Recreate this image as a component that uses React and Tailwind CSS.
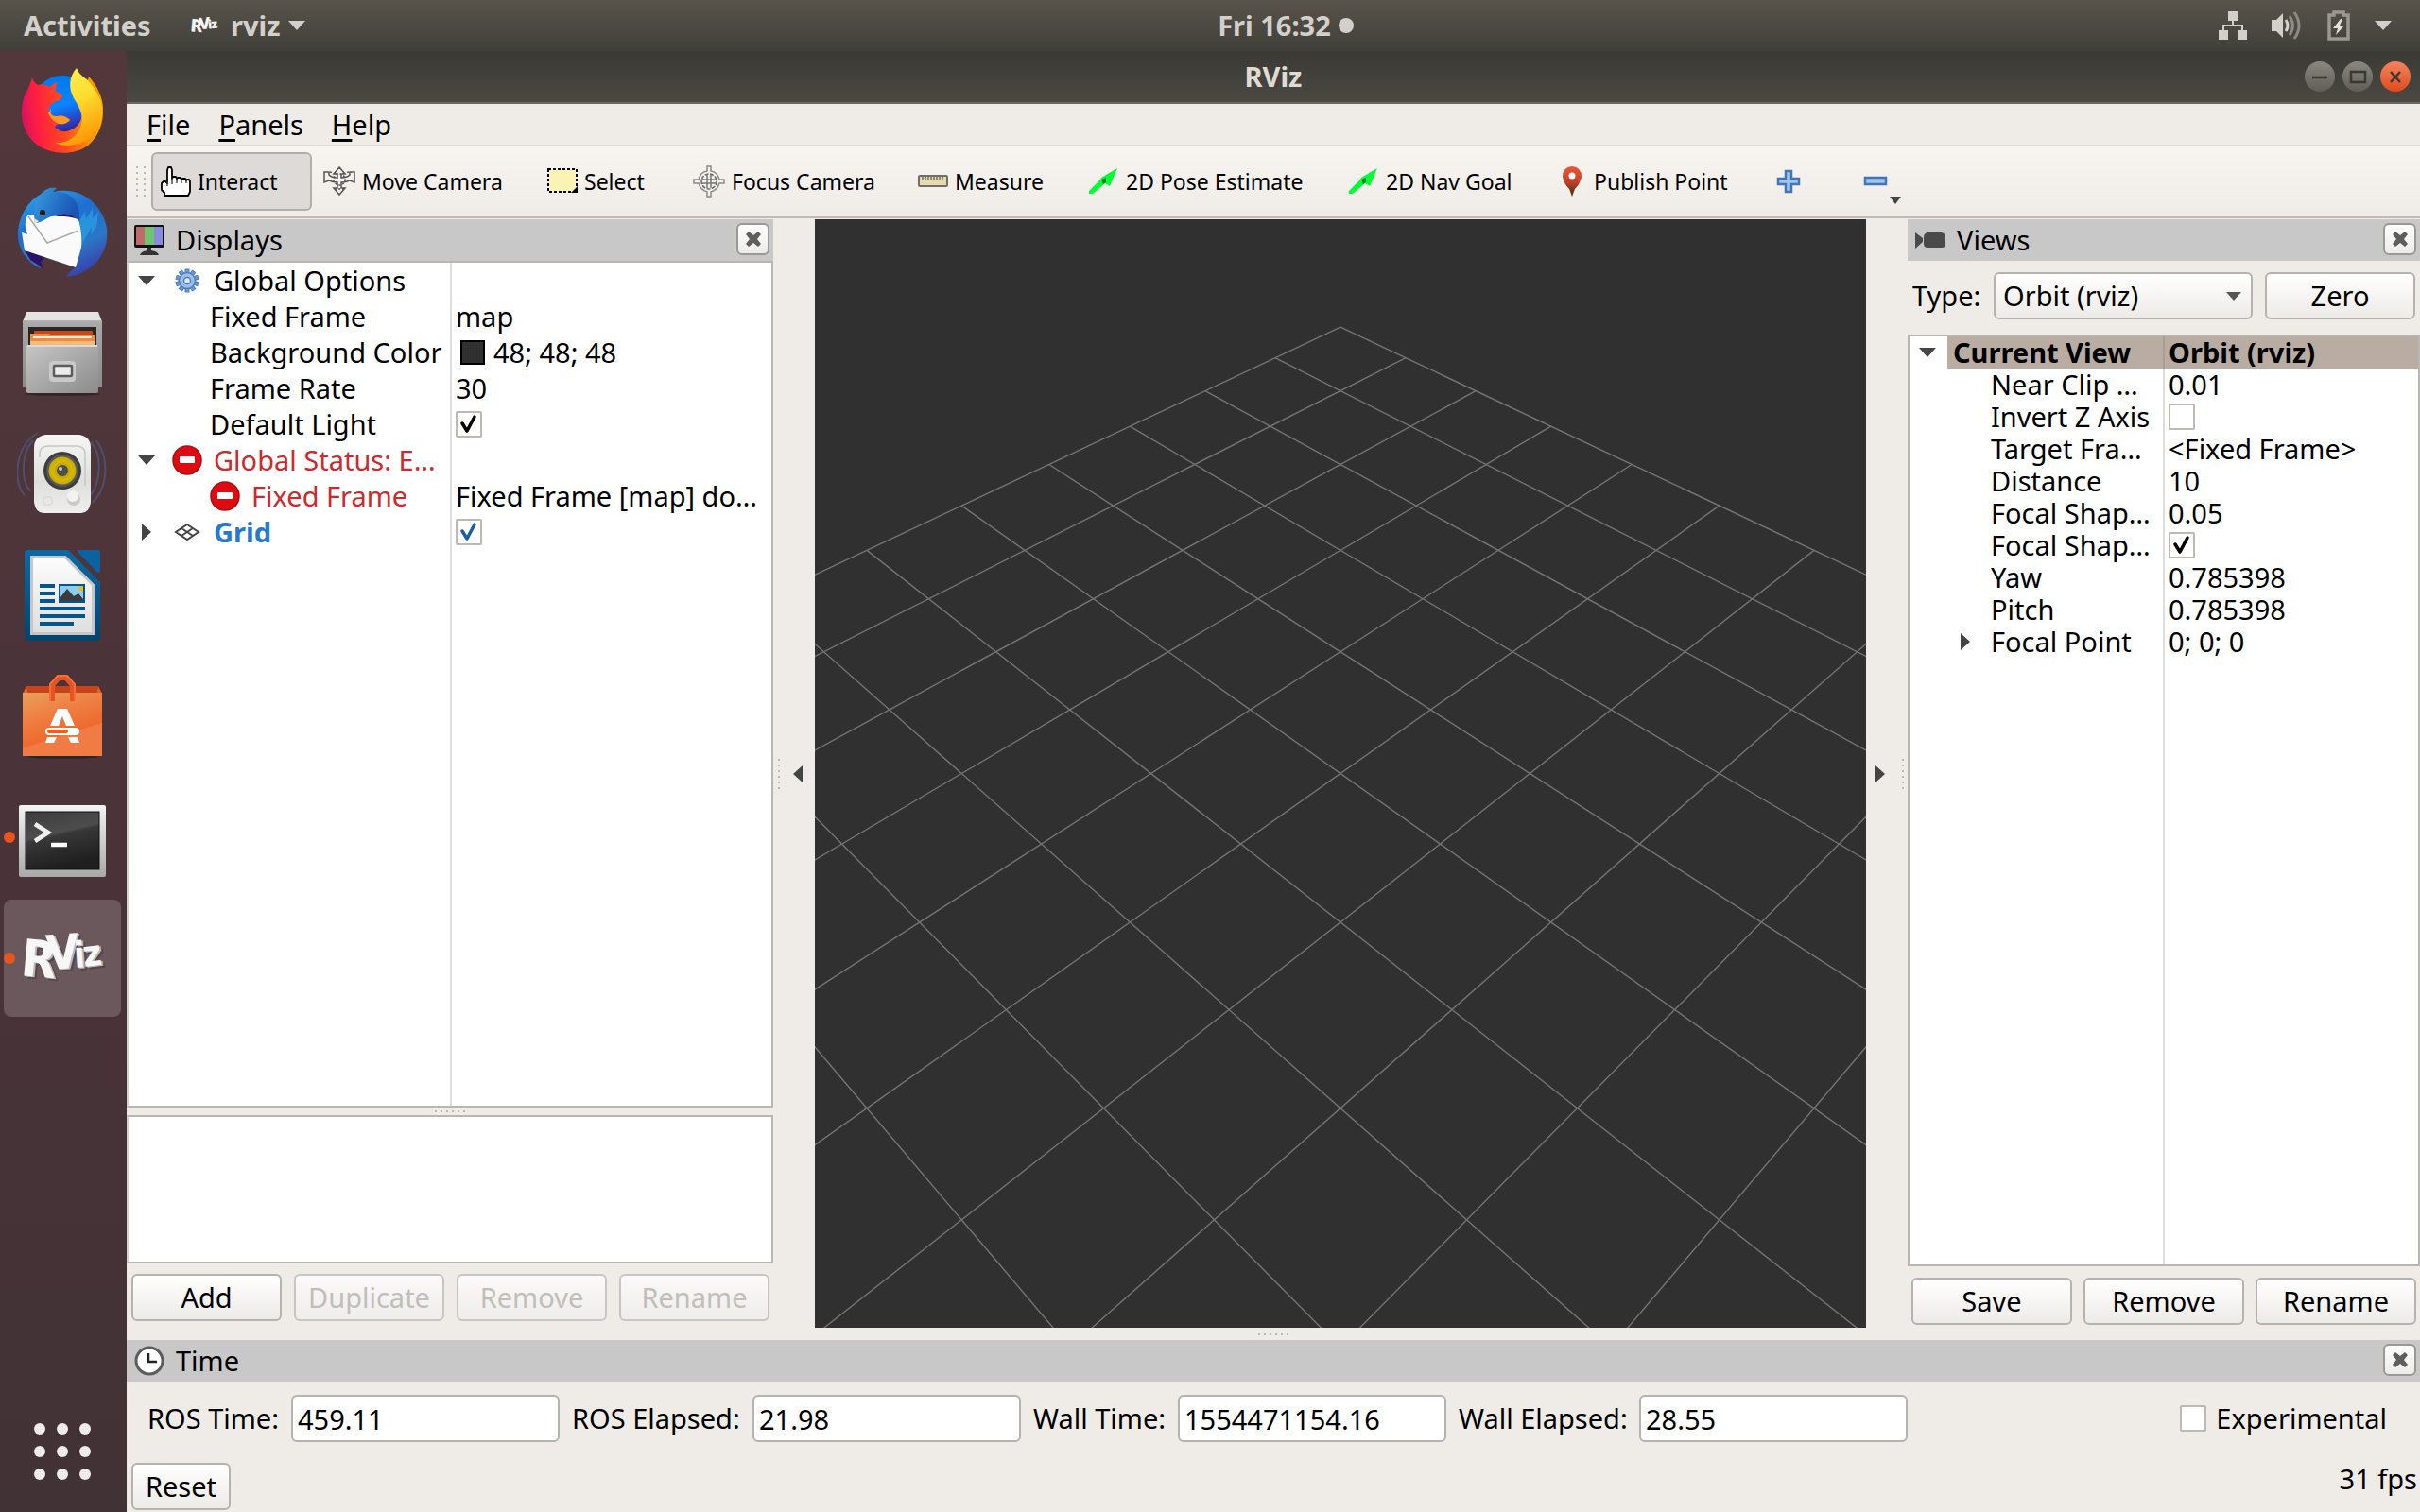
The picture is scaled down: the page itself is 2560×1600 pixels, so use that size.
import { useId } from "react";

const FONT = "font-['Noto_Sans','Open_Sans',sans-serif]";

/* ---------- small shared pieces ---------- */

function Tri({ dir = "down", className = "" }) {
  return dir === "down" ? (
    <svg viewBox="0 0 18 10" className={`h-[10px] w-[18px] shrink-0 ${className}`} fill="currentColor" aria-hidden="true"><path d="M0 0H18L9 10Z" /></svg>
  ) : (
    <svg viewBox="0 0 10 18" className={`h-[18px] w-[10px] shrink-0 ${className}`} fill="currentColor" aria-hidden="true"><path d={dir === "left" ? "M10 0V18L0 9Z" : "M0 0V18L10 9Z"} /></svg>
  );
}

function CheckBox({ checked = false, label, id, blue = false }) {
  return (
    <span className="inline-grid shrink-0 place-items-center">
      <input id={id} type="checkbox" defaultChecked={checked} aria-label={label} className="col-start-1 row-start-1 size-7 appearance-none rounded-[2px] border-2 border-[#bfb9b3] bg-white" />
      {checked && (
        <svg viewBox="0 0 28 28" className={`pointer-events-none col-start-1 row-start-1 size-7 ${blue ? "text-[#1c5da3]" : "text-black"}`} fill="none" stroke="currentColor" aria-hidden="true">
          <path d="M7 13 12 21 20 6" strokeWidth="3.500" strokeLinejoin="round" strokeLinecap="round" />
        </svg>
      )}
    </span>
  );
}

function Button({ children, disabled = false, className = "" }) {
  return (
    <button type="button" disabled={disabled} className={`h-[50px] rounded-[6px] border-2 border-[#b6b2ad] bg-linear-to-b from-white to-[#edebe8] text-center text-black disabled:border-[#c9c5c0] disabled:from-[#fbfafa] disabled:to-[#efedea] disabled:text-[#c1beba] ${className}`}>{children}</button>
  );
}

function PanelTitle({ icon, title, children }) {
  return (
    <div className="flex h-[44px] shrink-0 items-center bg-[#c8c8c8] pr-1 pl-2">
      {icon}
      <h2 className="ml-3 flex-1">{title}</h2>
      <button type="button" aria-label={`Close ${title}`} className="mb-[2px] flex h-[34px] w-[35px] items-center justify-center rounded-[6px] border-2 border-[#9b9995] bg-linear-to-b from-white to-[#ecebe9]">
        <svg viewBox="0 0 16 16" className="size-[16px]" fill="#5f5e5b" aria-hidden="true"><path d="M3 0 8 4 13 0 16 3 12 8 16 13 13 16 8 12 3 16 0 13 4 8 0 3Z" /></svg>
      </button>
      {children}
    </div>
  );
}

function Grip({ vertical = false }) {
  return (
    <span className={`flex gap-[4px] ${vertical ? "flex-col" : ""}`} aria-hidden="true">
      {[0, 1, 2, 3, 4, 5].map((i) => <i key={i} className="size-[2px] bg-[#bcb7b1]" />)}
    </span>
  );
}

/* ---------- dock icons ---------- */

function Firefox() {
  return (
    <svg viewBox="0 0 96 96" className="size-24" aria-hidden="true">
      <defs>
        <linearGradient id="ffGlobe" x1="0.3" y1="0" x2="0.6" y2="1"><stop offset="0" stopColor="#0078e8" /><stop offset="0.5" stopColor="#0a84ff" /><stop offset="0.8" stopColor="#2b3fc0" /><stop offset="1" stopColor="#3a0f6e" /></linearGradient>
        <linearGradient id="ffBody" x1="0" y1="0.5" x2="1" y2="0.4"><stop offset="0" stopColor="#d9125f" /><stop offset="0.18" stopColor="#ff1d43" /><stop offset="0.5" stopColor="#ff4a1c" /><stop offset="0.78" stopColor="#ff8b0d" /><stop offset="1" stopColor="#ffb400" /></linearGradient>
        <linearGradient id="ffFlame" x1="0" y1="0" x2="0.3" y2="1"><stop offset="0" stopColor="#fff25a" /><stop offset="0.5" stopColor="#ffdd2e" /><stop offset="1" stopColor="#ff9d0a" /></linearGradient>
      </defs>
      <circle cx="48" cy="42" r="32" fill="url(#ffGlobe)" />
      <path fill="#ff9500" d="M76 11C84 20 91 32 91 46L70 30Z" />
      <path fill="url(#ffBody)" d="M16 12C17 16 19 18 22 20C27 19 32 20 35 22Q38 18 43 17Q40 22 41 27Q47 28 48 32Q46 37 41 37Q35 40 33 46Q35 54 42 53Q50 51 56 57Q52 62 45 61Q40 62 40 65Q46 70 53 69C64 66 71 57 69 44Q68 36 72 30L88 32C95 52 89 72 75 84C60 95 36 94 21 83C6 71 2 52 7 34C9 27 13 24 16 12Z" />
      <path fill="#ff9a1f" d="M36 45Q34 54 42 53Q50 51 56 57Q52 62 45 61Q37 59 33 50Z" />
      <path fill="url(#ffFlame)" d="M63 2C55 11 54 23 60 34C69 47 73 60 62 73C55 80 46 82 40 81C56 88 76 82 86 66C95 48 88 29 75 15C70 11 65 8 63 2Z" />
    </svg>
  );
}

function Thunderbird() {
  return (
    <svg viewBox="0 0 96 96" className="size-24" aria-hidden="true">
      <defs>
        <linearGradient id="tbBody" x1="0.2" y1="0" x2="0.7" y2="1"><stop offset="0" stopColor="#2e9fe6" /><stop offset="0.35" stopColor="#1f6fd0" /><stop offset="0.7" stopColor="#2a77c6" /><stop offset="1" stopColor="#3b3ca8" /></linearGradient>
        <linearGradient id="tbHead" x1="0" y1="0" x2="1" y2="0.4"><stop offset="0" stopColor="#3d9fdc" /><stop offset="0.6" stopColor="#2371c7" /><stop offset="1" stopColor="#1b54b4" /></linearGradient>
      </defs>
      <path fill="url(#tbBody)" d="M25 86C8 78 0 63 1 46C3 29 12 15 24 8L44 4C68 1 90 17 95 43C98 68 82 92 52 95L58 89 50 94 62 85 8 66 12 73 20 77 25 86Z" />
      <path fill="#2b1468" d="M8 66 30 74 25 79 28 86 14 77ZM40 32C50 25 60 29 65 36L62 46H34Z" />
      <path fill="#fafafa" d="M11 30 26 30C40 32 50 29 65 34C68 44 69 54 68 64L62 85 8 67 5 48 11 50C8 42 8 36 11 30Z" />
      <path fill="none" stroke="#a9a9a9" strokeWidth="1.500" d="M12 31 32 59 65 46" />
      <path fill="url(#tbHead)" d="M19 38C17 26 18 12 30 3C35 0 40 0 42 1L38 5C56 4 68 14 66 36C56 26 44 27 34 32C28 35 24 38 19 38Z" />
      <path fill="#28a2e4" d="M66 36 72 25 73 34 80 22 80 33 86 26 84 42 78 50 79 42 70 58Z" opacity="0.700" />
      <circle cx="27" cy="27" r="3" fill="#2a1a08" />
      <path fill="#dfe9c4" d="M18 33 19 39 23 36Z" />
    </svg>
  );
}

function Files() {
  return (
    <svg viewBox="0 0 96 96" className="size-24" aria-hidden="true">
      <defs>
        <linearGradient id="flCase" x1="0" y1="0" x2="0" y2="1"><stop offset="0" stopColor="#dcdcdc" /><stop offset="0.15" stopColor="#a9a9a9" /><stop offset="1" stopColor="#8c8c8c" /></linearGradient>
        <linearGradient id="flFront" x1="0" y1="0" x2="1" y2="1"><stop offset="0" stopColor="#c6c6c6" /><stop offset="1" stopColor="#8b8b8b" /></linearGradient>
      </defs>
      <ellipse cx="48" cy="91" rx="40" ry="2" fill="#000" opacity="0.300" />
      <path fill="url(#flCase)" d="M10 4H86L90 14V83H6V14Z" />
      <path fill="#e3e3e3" d="M11 4H85L89 13H7Z" />
      <path fill="#2b2622" d="M12 20H84V40H12Z" />
      <path fill="#c4481c" d="M18 24H80V30H18Z" /><path fill="#f08a3c" d="M14 27H34L36 28H82V40H14Z" />
      <path fill="#ffe9d6" d="M17 30H79V32H17Z" /><path fill="#f6bb7c" d="M14 35H82V40H14Z" />
      <rect x="10" y="39" width="76" height="51" rx="2" fill="url(#flFront)" /><path fill="#dadada" d="M11 39H85V41H11Z" />
      <rect x="34" y="56" width="28" height="22" rx="4" fill="#c9c9c9" />
      <rect x="39" y="61" width="19" height="11" rx="1" fill="#ececec" stroke="#5c5c5c" strokeWidth="2.500" />
    </svg>
  );
}

function Rhythmbox() {
  return (
    <svg viewBox="0 0 96 96" className="size-24" aria-hidden="true">
      <defs>
        <linearGradient id="rbBody" x1="0" y1="0" x2="0" y2="1"><stop offset="0" stopColor="#f6f6f4" /><stop offset="0.6" stopColor="#dededc" /><stop offset="1" stopColor="#efefed" /></linearGradient>
        <radialGradient id="rbCone"><stop offset="0" stopColor="#a08600" /><stop offset="0.7" stopColor="#d6b800" /><stop offset="1" stopColor="#c9a900" /></radialGradient>
      </defs>
      <g fill="none" stroke="#50618e" strokeWidth="2" opacity="0.600">
        <path d="M22 4C-4 20-4 58 8 70M17 12C4 26 4 54 14 66M78 14C90 26 90 56 76 72M84 12C98 32 96 62 80 78" />
      </g>
      <path fill="url(#rbBody)" d="M30 6H66Q78 8 78 20V78Q76 89 68 89H28Q20 89 18 78V20Q18 8 30 6Z" />
      <path fill="none" stroke="#c3c6cb" strokeWidth="1.500" d="M24 30V26Q24 19 32 18H64Q72 19 72 26V60" />
      <circle cx="48" cy="44" r="20" fill="#3b3d3e" /><circle cx="48" cy="44" r="17" fill="#55585a" /><circle cx="48" cy="44" r="14.500" fill="url(#rbCone)" />
      <circle cx="48" cy="44" r="6" fill="#4c4e50" /><circle cx="46" cy="42" r="2" fill="#c4c6c8" />
      <circle cx="60" cy="74" r="7" fill="#c9c9c7" /><circle cx="59" cy="71" r="6" fill="#f2f2f0" />
      <rect x="28" y="72" width="9" height="8" rx="2" fill="none" stroke="#d2d2cf" />
    </svg>
  );
}

function Writer() {
  return (
    <svg viewBox="0 0 96 96" className="size-24" aria-hidden="true">
      <defs>
        <linearGradient id="wrEdge" x1="0" y1="0" x2="0" y2="1"><stop offset="0" stopColor="#0a6aa6" /><stop offset="1" stopColor="#04446d" /></linearGradient>
        <linearGradient id="wrPage" x1="0" y1="0" x2="0" y2="1"><stop offset="0" stopColor="#fdfdfd" /><stop offset="1" stopColor="#dedede" /></linearGradient>
      </defs>
      <path fill="url(#wrEdge)" d="M12 0H54L88 34V92Q88 96 84 96H12Q8 96 8 92V4Q8 0 12 0Z" />
      <path fill="#0a63a0" d="M64 0H85Q88 0 88 3V22Q87 25 84 23L65 3Q63 1 64 0Z" />
      <path fill="url(#wrPage)" stroke="#c6c6c6" strokeWidth="3" d="M15.500 7.500H51L80.500 37V88.500H15.500Z" />
      <path fill="#065587" d="M24 36H40V40H24ZM24 44H40V48H24ZM24 52H40V56H24ZM24 60H72V64H24ZM24 68H72V72H24ZM24 76H60V80H24Z" />
      <path fill="#06558a" d="M44 36H72V56H44Z" /><path fill="#8fcdf0" d="M46 38H70V54H46Z" />
      <path fill="#e0b83c" d="M64 38H70V44Q65 44 64 38Z" /><path fill="#3c3c3c" d="M46 54V50L53 41 60 49 65 46 70 52V54Z" />
    </svg>
  );
}

function Software() {
  return (
    <svg viewBox="0 0 96 96" className="size-24" aria-hidden="true">
      <defs>
        <linearGradient id="swBag" x1="0" y1="0" x2="0.4" y2="1"><stop offset="0" stopColor="#e8a05c" /><stop offset="0.4" stopColor="#ef7f43" /><stop offset="0.75" stopColor="#ee6a2e" /><stop offset="0.76" stopColor="#f07b45" /><stop offset="1" stopColor="#f07b45" /></linearGradient>
      </defs>
      <ellipse cx="48" cy="91" rx="38" ry="2" fill="#000" opacity="0.300" />
      <path fill="#c7441a" d="M10 16H86L84 24H12Z" /><path fill="#e9602c" d="M10 16 12 24H6ZM86 16 84 24H90Z" />
      <path fill="url(#swBag)" d="M6 23H90V90H6Z" />
      <path fill="none" stroke="#e6551f" strokeWidth="6" d="M37 32V15L44 7H52L59 15V32" /><path fill="none" stroke="#f37a45" strokeWidth="1.500" d="M35 32V14L43 5H53L61 14V32" />
      <path fill="#fff" d="M43 40H53L61 58H52L48 48 44 58H35ZM32 70H42L39 76H30ZM54 70H64L66 76H57Z" />
      <rect x="30" y="60" width="36" height="8" rx="4" fill="#fff" /><rect x="32" y="62" width="22" height="4" rx="2" fill="#ee5f22" />
    </svg>
  );
}

function Terminal() {
  return (
    <svg viewBox="0 0 96 96" className="size-24" aria-hidden="true">
      <defs>
        <linearGradient id="tmFrame" x1="0" y1="0" x2="0" y2="1"><stop offset="0" stopColor="#f4f4f4" /><stop offset="1" stopColor="#a9a9a9" /></linearGradient>
        <linearGradient id="tmScreen" x1="0" y1="0" x2="0.3" y2="1"><stop offset="0" stopColor="#3c3c3c" /><stop offset="0.45" stopColor="#4d4d4d" /><stop offset="0.5" stopColor="#383838" /><stop offset="1" stopColor="#1f1f1f" /></linearGradient>
      </defs>
      <rect x="2" y="14" width="92" height="76" rx="2" fill="url(#tmFrame)" />
      <rect x="9" y="21" width="78" height="61" fill="url(#tmScreen)" stroke="#111" />
      <path fill="none" stroke="#eee" strokeWidth="4.500" d="M19 34 33 43 19 52" /><path stroke="#fff" strokeWidth="4.500" d="M36 56H53" />
    </svg>
  );
}

function RvizLogo({ className }) {
  return (
    <svg viewBox="0 0 96 96" className={className} aria-label="RViz" role="img">
      {[["#55464b", 4, 3], ["#b9b9b9", 2, 1], ["#f7f7f7", 0, 0]].map(([c, dx, dy]) => (
        <g key={c} fill={c} fontFamily="'DejaVu Sans Condensed','DejaVu Sans'" fontWeight="700" transform={`translate(${dx} ${dy})`}>
          <text x="0" y="0" fontSize="54" transform="translate(3 66) rotate(5)">R</text>
          <text x="0" y="0" fontSize="50" transform="translate(32 60) rotate(-4)">V</text>
          <text x="0" y="0" fontSize="38" transform="translate(61 58) rotate(-4)">i</text>
          <text x="0" y="0" fontSize="38" transform="translate(71 57) rotate(-7)">z</text>
        </g>
      ))}
    </svg>
  );
}

const DOCK = [
  { name: "Firefox", icon: <Firefox /> },
  { name: "Thunderbird", icon: <Thunderbird /> },
  { name: "Files", icon: <Files /> },
  { name: "Rhythmbox", icon: <Rhythmbox /> },
  { name: "LibreOffice Writer", icon: <Writer /> },
  { name: "Ubuntu Software", icon: <Software /> },
  { name: "Terminal", icon: <Terminal />, running: true },
  { name: "RViz", icon: <RvizLogo className="size-24" />, running: true, active: true },
];

function Dock() {
  return (
    <nav aria-label="Dock" className="flex w-[134px] shrink-0 flex-col bg-linear-to-b from-[#52383b] via-[#4a3339] to-[#413236]">
      {DOCK.map((d) => (
        <div key={d.name} className="flex h-32 items-center">
          <button type="button" aria-label={d.name} className={`relative mx-1 flex h-[124px] w-[124px] items-center justify-center rounded-[8px] ${d.active ? "bg-[#6a585d]" : ""}`}>
            {d.running && <span className="absolute left-0 size-3 rounded-full bg-[#e9541f]" />}
            {d.icon}
          </button>
        </div>
      ))}
      <button type="button" aria-label="Show Applications" className="mt-auto mb-[34px] ml-9 grid w-[60px] grid-cols-3 gap-3">
        {[0, 1, 2, 3, 4, 5, 6, 7, 8].map((i) => <i key={i} className="size-3 rounded-full bg-[#eeeceb]" />)}
      </button>
    </nav>
  );
}

/* ---------- top bar and title bar ---------- */

function TopBar() {
  return (
    <header className="flex h-[54px] shrink-0 items-center bg-linear-to-b from-[#58544b] to-[#403f39] font-bold text-[#d3d0cb]">
      <button type="button" className="w-[160px] pl-[25px] text-left">Activities</button>
      <div className="grid flex-1 grid-cols-[1fr_auto_1fr] items-center">
        <button type="button" className="flex items-center pl-[40px]">
          <RvizLogo className="size-8" />
          <span className="ml-3">rviz</span>
          <Tri className="ml-2" />
        </button>
        <button type="button" className="flex items-center gap-2">Fri 16:32<span className="size-4 rounded-full bg-[#d3d0cb]" /></button>
        <button type="button" aria-label="System menu" className="flex items-center justify-end pr-[30px]">
          <svg viewBox="0 0 30 30" className="size-[30px]" fill="currentColor" aria-hidden="true"><path d="M10 0H20V10H16V14H26V20H30V30H20V20H24V16H6V20H10V30H0V20H4V14H14V10H10Z" /></svg>
          <svg viewBox="0 0 32 30" className="ml-[26px] h-[30px] w-[32px]" aria-hidden="true">
            <path fill="currentColor" d="M0 9H5L12 2V28L5 21H0Z" />
            <path d="M15 9Q19 15 15 21" fill="none" stroke="currentColor" strokeWidth="3" /><path d="M19 5Q26 15 19 25M24 1Q34 15 24 29" fill="none" stroke="#8d8a83" strokeWidth="3" />
          </svg>
          <svg viewBox="0 0 24 32" className="ml-[27px] h-[32px] w-[24px]" aria-hidden="true">
            <path d="M7 2H17V5H22V30H2V5H7Z" fill="none" stroke="#9b9892" strokeWidth="3.500" /><path d="M14 9 6 19H11L9 26 18 16H13L16 9Z" fill="#e4e1dc" />
          </svg>
          <Tri className="ml-[26px]" />
        </button>
      </div>
    </header>
  );
}

function TitleBar() {
  const dim = "bg-linear-to-b from-[#8b8880] to-[#5f5d56]";
  return (
    <div className="grid h-[56px] shrink-0 grid-cols-[1fr_auto_1fr] items-center border-b-2 border-[#6a675f] bg-linear-to-b from-[#3a3934] to-[#4c4943] font-bold text-[#e0dcd3]">
      <span />
      <h1>RViz</h1>
      <div className="flex justify-end gap-2 pr-[10px] text-[#3a3833]">
        <button type="button" aria-label="Minimize" className={`size-8 rounded-full ${dim}`}><svg viewBox="0 0 32 32" fill="none" stroke="currentColor" strokeWidth="2.500"><path d="M8 17H24" /></svg></button>
        <button type="button" aria-label="Maximize" className={`size-8 rounded-full ${dim}`}><svg viewBox="0 0 32 32" fill="none" stroke="currentColor" strokeWidth="2.500"><path d="M9 11H24V22H9Z" /></svg></button>
        <button type="button" aria-label="Close" className="size-8 rounded-full bg-linear-to-b from-[#f4825c] to-[#df4a16]"><svg viewBox="0 0 32 32" fill="none" stroke="currentColor" strokeWidth="2.500"><path d="M11 11 21 22M21 11 11 22" /></svg></button>
      </div>
    </div>
  );
}

/* ---------- toolbar ---------- */

const arrowIcon = (
  <svg viewBox="0 0 32 32" className="size-8" aria-hidden="true"><path fill="#0f3" d="M30 2 22 21 17 18 4 29 0 29 0 26 12 14 13 12Z" /><path fill="#0a6b22" d="M13 14 18 12 18 17 15 19Z" opacity="0.800" /></svg>
);

const TOOLS = [
  { label: "Interact", w: "w-[172px]", active: true, icon: (
    <svg viewBox="0 0 32 32" className="size-8" fill="#fff" stroke="#000" strokeWidth="1.800" strokeLinejoin="round" aria-hidden="true"><path d="M4 31V28L1 25V18L3 16H5L7 18V4L8 1H11L12 4V13L13 11H16L17 13 18 12H21L22 14 23 13H26L27 15 28 14H30L31 16V27L29 31Z" /><path d="M7 16V21M12 12V19M17 13V18M22 14V18M27 15V18" stroke="#333" strokeWidth="1.300" /></svg>) },
  { label: "Move Camera", w: "w-[237px]", icon: (
    <svg viewBox="0 0 34 32" className="h-8 w-[34px]" fill="none" stroke="#555" strokeWidth="1.500" aria-hidden="true"><path fill="#f4f2ee" d="M17 1 23 8H19V12Q25 12 28 9V6L33 6V17L28 15Q24 17 19 17V23H23L17 30 11 23H15V17Q10 17 6 15L1 17V6H6V9Q9 12 15 12V8H11Z" /><circle cx="17" cy="14" r="6" strokeDasharray="2 2" /><path d="M7 6 14 8M27 6 20 8M12 24H22" strokeDasharray="2 2" /></svg>) },
  { label: "Select", w: "w-[154px]", icon: (
    <svg viewBox="0 0 32 32" className="size-8" aria-hidden="true"><path d="M1 3H31V27H1Z" fill="#fbf3b4" stroke="#000" strokeWidth="2" strokeDasharray="3 2" /><path d="M32 21V28H25Z" /></svg>) },
  { label: "Focus Camera", w: "w-[238px]", icon: (
    <svg viewBox="0 0 34 34" className="size-[34px]" fill="none" stroke="#8b8b8b" strokeWidth="1.500" aria-hidden="true"><path fill="#f4f2ee" d="M15 1H19V6Q26 7 28 15H33V19H28Q26 26 19 28V33H15V28Q8 26 6 19H1V15H6Q8 7 15 6Z" /><circle cx="17" cy="17" r="8" stroke="#666" strokeDasharray="4 1.500" /><path d="M15 10V24M19 10V24M10 15H24M10 19H24" stroke="#777" /></svg>) },
  { label: "Measure", w: "w-[181px]", icon: (
    <svg viewBox="0 0 32 32" className="size-8" aria-hidden="true"><rect x="1" y="10" width="30" height="11" rx="1" fill="#e6dca9" stroke="#6f6e6a" strokeWidth="2" /><path d="M5 11V15M8 11V14M11 11V15M14 11V14M17 11V15M20 11V14M23 11V15M26 11V14" stroke="#6f6e6a" strokeWidth="1.500" /></svg>) },
  { label: "2D Pose Estimate", w: "w-[275px]", icon: arrowIcon },
  { label: "2D Nav Goal", w: "w-[220px]", icon: arrowIcon },
  { label: "Publish Point", w: "w-[224px]", icon: (
    <svg viewBox="0 0 32 32" className="size-8" aria-hidden="true"><defs><linearGradient id="pin" x1="0" y1="0" x2="0" y2="1"><stop offset="0" stopColor="#ee5535" /><stop offset="0.5" stopColor="#c8402a" /><stop offset="0.8" stopColor="#6e3a1c" /><stop offset="1" stopColor="#3c3a14" /></linearGradient></defs><path fill="url(#pin)" d="M16 0Q26 1 26 11 25 18 19 24L16 32 13 24Q7 18 6 11 6 1 16 0Z" /><circle cx="16" cy="10" r="3.500" fill="#fff" /></svg>) },
];

function Toolbar() {
  return (
    <div role="toolbar" className="flex h-[76px] shrink-0 items-center border-b-2 border-[#c0bbb7] bg-linear-to-b from-[#f8f5f1] to-[#efece7] pl-[10px] text-[23px]">
      <span className="mr-[6px] flex gap-[6px]" aria-hidden="true"><Grip vertical /><Grip vertical /></span>
      {TOOLS.map((t) => (
        <div key={t.label} className={t.w}>
          <button type="button" aria-pressed={!!t.active} className={`flex h-[62px] items-center gap-[7px] rounded-[6px] border-2 pl-[8px] ${t.active ? "w-[170px] border-[#b3aeaa] bg-[#dddad7]" : "border-transparent"}`}>{t.icon}{t.label}</button>
        </div>
      ))}
      <button type="button" aria-label="Add tool" className="ml-[18px]"><svg viewBox="0 0 26 26" className="size-[26px]"><path d="M10 2H16V10H24V16H16V24H10V16H2V10H10Z" fill="#a3c5ea" stroke="#3f75b9" strokeWidth="2.500" /></svg></button>
      <button type="button" aria-label="Remove tool" className="ml-[66px] flex items-center"><svg viewBox="0 0 26 26" className="size-[26px]"><path d="M2 9H24V16H2Z" fill="#a3c5ea" stroke="#3f75b9" strokeWidth="2.500" /></svg><svg viewBox="0 0 12 8" className="mt-10 ml-[2px] h-2 w-3" fill="#444"><path d="M0 0H12L6 8Z" /></svg></button>
    </div>
  );
}

/* ---------- property trees ---------- */

const gearIcon = (
  <svg viewBox="0 0 26 26" className="size-[26px]" aria-hidden="true">
    <g fill="#6c9bd2" stroke="#4c7fbe">{[0, 36, 72, 108, 144].map((a) => <rect key={a} x="11" y="1" width="4" height="24" transform={`rotate(${a} 13 13)`} />)}</g>
    <circle cx="13" cy="13" r="8.500" fill="#9dbfe6" stroke="#4c7fbe" strokeWidth="1.500" /><circle cx="13" cy="13" r="3.500" fill="#dfeaf7" stroke="#4c7fbe" strokeWidth="1.500" />
  </svg>
);
const errorIcon = (
  <svg viewBox="0 0 32 32" className="size-8 shrink-0" aria-hidden="true"><circle cx="16" cy="16" r="15" fill="#de0c12" stroke="#a90d10" strokeWidth="1.500" /><rect x="8" y="12" width="16" height="7" rx="1" fill="#fff" /></svg>
);
const gridIcon = (
  <svg viewBox="0 0 28 20" className="h-5 w-7" fill="none" stroke="#444" strokeWidth="2" aria-hidden="true"><path d="M14 2 26 10 14 18 2 10ZM8 6 20 14M20 6 8 14" /></svg>
);

const DISPLAYS = [
  { open: "down", icon: gearIcon, name: "Global Options" },
  { name: "Fixed Frame", value: "map" },
  { name: "Background Color", value: <span className="flex items-center"><i className="mr-[9px] ml-[5px] size-[26px] border-2 border-black bg-[#303030]" />48; 48; 48</span> },
  { name: "Frame Rate", value: "30" },
  { name: "Default Light", value: <CheckBox checked label="Default Light" /> },
  { open: "down", icon: errorIcon, name: "Global Status: E…", tone: "text-[#cc2a2d]" },
  { nested: errorIcon, name: "Fixed Frame", tone: "text-[#cc2a2d]", value: "Fixed Frame [map] do…" },
  { open: "right", icon: gridIcon, name: "Grid", tone: "font-bold text-[#2779cc]", value: <CheckBox checked blue label="Grid" /> },
];

function DisplaysTree() {
  return (
    <div className="flex min-h-0 flex-1 flex-col border-2 border-[#bbb6b1] border-l-[#d5d2ce] bg-white">
      <table className="w-full table-fixed border-collapse">
        <colgroup><col className="w-[341px]" /><col /></colgroup>
        <tbody>
          {DISPLAYS.map((r, i) => (
            <tr key={i} className="h-[38px]">
              <td className="border-r-2 border-[#dfdddb] p-0">
                <div className={`flex h-[38px] items-center whitespace-nowrap ${r.tone || ""}`}>
                  {r.icon ? (
                    <>
                      <span className="flex w-[42px] shrink-0 justify-center text-[#444]"><Tri dir={r.open} className="mr-1" /></span>
                      <span className="flex w-[40px] shrink-0 justify-center">{r.icon}</span>
                      <span className="ml-2">{r.name}</span>
                    </>
                  ) : (
                    <span className="flex items-center gap-3 pl-[86px]">{r.nested}{r.name}</span>
                  )}
                </div>
              </td>
              <td className="overflow-hidden p-0 pl-1 whitespace-nowrap"><div className="flex h-[38px] items-center">{r.value}</div></td>
            </tr>
          ))}
        </tbody>
      </table>
      <div className="w-[342px] flex-1 border-r-2 border-[#dfdddb]" />
    </div>
  );
}

const VIEW = [
  ["Near Clip …", "0.01"],
  ["Invert Z Axis", <CheckBox label="Invert Z Axis" />],
  ["Target Fra…", "<Fixed Frame>"],
  ["Distance", "10"],
  ["Focal Shap…", "0.05"],
  ["Focal Shap…", <CheckBox checked label="Focal Shape Fixed Size" />],
  ["Yaw", "0.785398"],
  ["Pitch", "0.785398"],
  ["Focal Point", "0; 0; 0", true],
];

function ViewsTree() {
  return (
    <div className="mt-4 flex min-h-0 flex-1 flex-col border-2 border-[#bbb6b1] bg-white">
      <table className="w-full table-fixed border-collapse">
        <colgroup><col className="w-[269px]" /><col /></colgroup>
        <tbody>
          <tr className="h-[34px] font-bold">
            <td className="border-r-2 border-[#a99d94] p-0">
              <div className="flex h-[34px] items-center text-[#444]"><Tri className="mr-[12px] ml-[10px]" /><span className="flex h-full flex-1 items-center bg-[#b9aca2] pl-[6px] text-black">Current View</span></div>
            </td>
            <td className="bg-[#b9aca2] p-0 pl-1">Orbit (rviz)</td>
          </tr>
          {VIEW.map(([name, value, arrow], i) => (
            <tr key={i} className="h-[34px]">
              <td className="border-r-2 border-[#dfdddb] p-0">
                <div className="flex h-[34px] items-center whitespace-nowrap"><span className="flex w-[86px] shrink-0 pl-[54px] text-[#444]">{arrow && <Tri dir="right" />}</span>{name}</div>
              </td>
              <td className="p-0 pl-1"><div className="flex h-[34px] items-center">{value}</div></td>
            </tr>
          ))}
        </tbody>
      </table>
      <div className="w-[270px] flex-1 border-r-2 border-[#dfdddb]" />
    </div>
  );
}

/* ---------- 3D view: ground grid, orbit camera at yaw and pitch 45 degrees ---------- */

const S = Math.SQRT1_2;
function project(x, y) {
  const u = (x - y) * S;
  const v = (x + y) * S;
  const depth = 10 + v * S;
  return [(1417 * u) / depth, (-1417 * v * S) / depth];
}

function Viewport() {
  const lines = [];
  for (let i = -5; i <= 5; i++) {
    lines.push([project(i, -5), project(i, 5)], [project(-5, i), project(5, i)]);
  }
  return (
    <main className="min-w-0 flex-1 bg-[#303030]">
      <svg viewBox="-556 -587 1112 1174" preserveAspectRatio="xMidYMid slice" className="block h-full w-full" stroke="#747475" strokeWidth="1.400" aria-label="3D view">
        {lines.map(([a, b], i) => <line key={i} x1={a[0]} y1={a[1]} x2={b[0]} y2={b[1]} />)}
      </svg>
    </main>
  );
}

/* ---------- panels ---------- */

const monitorIcon = (
  <svg viewBox="0 0 32 32" className="size-8" aria-hidden="true"><rect width="32" height="24" rx="2" fill="#111" /><path fill="#c06a6a" d="M2 2H11V21H2Z" /><path fill="#6fc46f" d="M11 2H21V21H11Z" /><path fill="#8a8ae0" d="M21 2H30V21H21Z" /><path fill="#333" d="M14 24H18V27Q25 28 26 32H6Q7 28 14 27Z" /></svg>
);
const cameraIcon = (
  <svg viewBox="0 0 32 32" className="size-8" fill="#4a4a4a" aria-hidden="true"><path d="M0 8 8 14V18L0 25ZM13 8H28Q32 9 32 13V20Q32 24 28 24H13Q9 24 9 20V13Q9 9 13 8Z" /></svg>
);
const clockIcon = (
  <svg viewBox="0 0 32 32" className="size-8" aria-hidden="true"><circle cx="16" cy="16" r="14" fill="#fff" stroke="#5c5c5c" strokeWidth="3" /><path d="M15 8V17H24" fill="none" stroke="#222" strokeWidth="2.500" /></svg>
);

function DisplaysPanel() {
  return (
    <section className="flex w-[684px] shrink-0 flex-col">
      <PanelTitle icon={monitorIcon} title="Displays" />
      <DisplaysTree />
      <div className="flex h-[8px] shrink-0 items-center justify-center"><Grip /></div>
      <div className="h-[157px] shrink-0 border-2 border-[#bbb6b1] border-l-[#d5d2ce] bg-white" />
      <div className="mt-[11px] mb-[7px] grid grid-cols-4 gap-[13px] pr-1 pl-[5px]">
        <Button>Add</Button>
        <Button disabled>Duplicate</Button>
        <Button disabled>Remove</Button>
        <Button disabled>Rename</Button>
      </div>
    </section>
  );
}

function ViewsPanel() {
  return (
    <section className="flex w-[542px] shrink-0 flex-col">
      <PanelTitle icon={cameraIcon} title="Views" />
      <div className="mt-3 flex items-center pr-[5px] pl-[5px]">
        <label htmlFor="view-type" className="w-[86px]">Type:</label>
        <span className="grid w-[274px] items-center">
          <select id="view-type" className="col-start-1 row-start-1 h-[50px] appearance-none rounded-[6px] border-2 border-[#b6b2ad] bg-linear-to-b from-white to-[#edebe8] pl-2"><option>Orbit (rviz)</option></select>
          <svg viewBox="0 0 16 9" className="pointer-events-none col-start-1 row-start-1 mr-3 h-[9px] w-4 justify-self-end" fill="#555"><path d="M0 0H16L8 9Z" /></svg>
        </span>
        <Button className="ml-[13px] flex-1">Zero</Button>
      </div>
      <ViewsTree />
      <div className="mt-[12px] mb-[3px] grid grid-cols-3 gap-3 px-1">
        <Button>Save</Button>
        <Button>Remove</Button>
        <Button>Rename</Button>
      </div>
    </section>
  );
}

function Field({ label, value, w }) {
  const id = useId();
  return (
    <>
      <label htmlFor={id} className={`shrink-0 whitespace-nowrap ${w}`}>{label}</label>
      <input id={id} type="text" defaultValue={value} readOnly className="mr-[13px] h-[50px] w-[284px] rounded-[6px] border-2 border-[#b6b2ad] bg-white px-[5px]" />
    </>
  );
}

function TimePanel() {
  return (
    <section className="shrink-0">
      <PanelTitle icon={clockIcon} title="Time" />
      <div className="flex h-[78px] items-center pr-[35px] pl-[22px]">
        <Field label="ROS Time:" value="459.11" w="w-[152px]" />
        <Field label="ROS Elapsed:" value="21.98" w="w-[191px]" />
        <Field label="Wall Time:" value="1554471154.16" w="w-[153px]" />
        <Field label="Wall Elapsed:" value="28.55" w="w-[191px]" />
        <span className="ml-auto flex items-center gap-[10px]"><CheckBox id="experimental" /><label htmlFor="experimental">Experimental</label></span>
      </div>
      <div className="flex h-[60px] items-start justify-between pt-2 pr-[3px] pl-[5px]">
        <Button className="w-[105px]">Reset</Button>
        <output>31 fps</output>
      </div>
    </section>
  );
}

export default function App() {
  return (
    <div className={`flex h-screen flex-col overflow-hidden bg-[#efece7] text-[29px] leading-[34px] text-black ${FONT}`}>
      <TopBar />
      <div className="flex min-h-0 flex-1">
        <Dock />
        <div className="flex min-w-0 flex-1 flex-col">
          <TitleBar />
          <div role="menubar" className="flex h-[45px] shrink-0 items-center gap-[30px] border-b-2 border-[#dad6d1] pl-[21px]">
            {["File", "Panels", "Help"].map((m) => (
              <button key={m} type="button" role="menuitem"><span className="underline decoration-[3px] underline-offset-4">{m[0]}</span>{m.slice(1)}</button>
            ))}
          </div>
          <Toolbar />
          <div className="mt-px flex min-h-0 flex-1">
            <DisplaysPanel />
            <div className="flex w-[44px] shrink-0 items-center gap-[14px] pl-[5px] text-[#444]"><Grip vertical /><Tri dir="left" /></div>
            <Viewport />
            <div className="flex w-[44px] shrink-0 items-center justify-between pr-1 pl-[10px] text-[#444]"><Tri dir="right" /><Grip vertical /></div>
            <ViewsPanel />
          </div>
          <div className="flex h-[13px] shrink-0 items-center justify-center"><Grip /></div>
          <TimePanel />
        </div>
      </div>
    </div>
  );
}
